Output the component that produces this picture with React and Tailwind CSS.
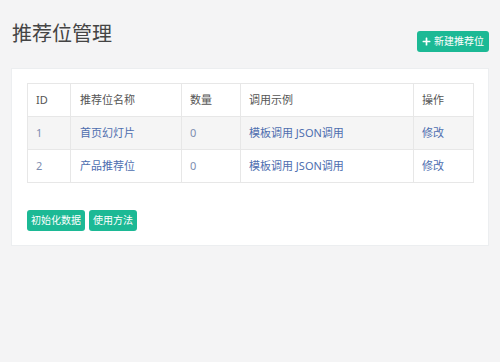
import { FaPlus } from "react-icons/fa";

const rows = [
    { id: 1, name: "首页幻灯片", count: 0 },
    { id: 2, name: "产品推荐位", count: 0 },
];

function App() {
    return (
        <div
            className="min-h-screen w-[500px] bg-[#f4f4f5] text-[#676a6c]"
            style={{ fontFamily: '"Noto Sans", "Noto Sans CJK SC", sans-serif' }}
        >
            <div className="flex items-start justify-between pl-[12px] pr-[11px] pt-[22px]">
                <h2 className="text-[20px] leading-[24px] font-normal text-[#444]">推荐位管理</h2>
                <button className="mt-[9px] flex h-[21px] items-center gap-[3px] rounded-[3px] bg-[#1cb995] px-[5px] text-[10px] font-normal text-white">
                    <FaPlus className="text-[9px]" />
                    新建推荐位
                </button>
            </div>

            <div className="mx-[11px] mt-[16px] border border-[#eceef0] bg-white px-[15px] pt-[14px] pb-[14px]">
                <table className="w-[447px] border-collapse text-[11px]">
                    <thead>
                        <tr className="h-[33px] text-left text-[#555]">
                            <th className="w-[43px] border border-[#e7e7e7] px-[8px] font-normal">ID</th>
                            <th className="w-[111px] border border-[#e7e7e7] px-[9px] font-normal">推荐位名称</th>
                            <th className="w-[59px] border border-[#e7e7e7] px-[8px] font-normal">数量</th>
                            <th className="w-[173px] border border-[#e7e7e7] px-[8px] font-normal">调用示例</th>
                            <th className="border border-[#e7e7e7] px-[8px] font-normal">操作</th>
                        </tr>
                    </thead>
                    <tbody>
                        {rows.map((row, i) => (
                            <tr key={row.id} className={`h-[33px] ${i % 2 === 0 ? "bg-[#f5f5f5]" : "bg-white"}`}>
                                <td className="border border-[#e7e7e7] px-[8px] text-[#7d8db0]">{row.id}</td>
                                <td className="border border-[#e7e7e7] px-[9px] text-[#4e6eaf]">{row.name}</td>
                                <td className="border border-[#e7e7e7] px-[8px] text-[#7d8db0]">{row.count}</td>
                                <td className="border border-[#e7e7e7] px-[8px] text-[#4e6eaf]">模板调用 JSON调用</td>
                                <td className="border border-[#e7e7e7] px-[8px] text-[#4e6eaf]">修改</td>
                            </tr>
                        ))}
                    </tbody>
                </table>

                <div className="mt-[27px] flex gap-[4px]">
                    <button className="h-[21px] rounded-[3px] bg-[#1cb995] px-[4px] text-[10px] font-normal text-white">初始化数据</button>
                    <button className="h-[21px] rounded-[3px] bg-[#1cb995] px-[4px] text-[10px] font-normal text-white">使用方法</button>
                </div>
            </div>
        </div>
    );
}

export default App;
